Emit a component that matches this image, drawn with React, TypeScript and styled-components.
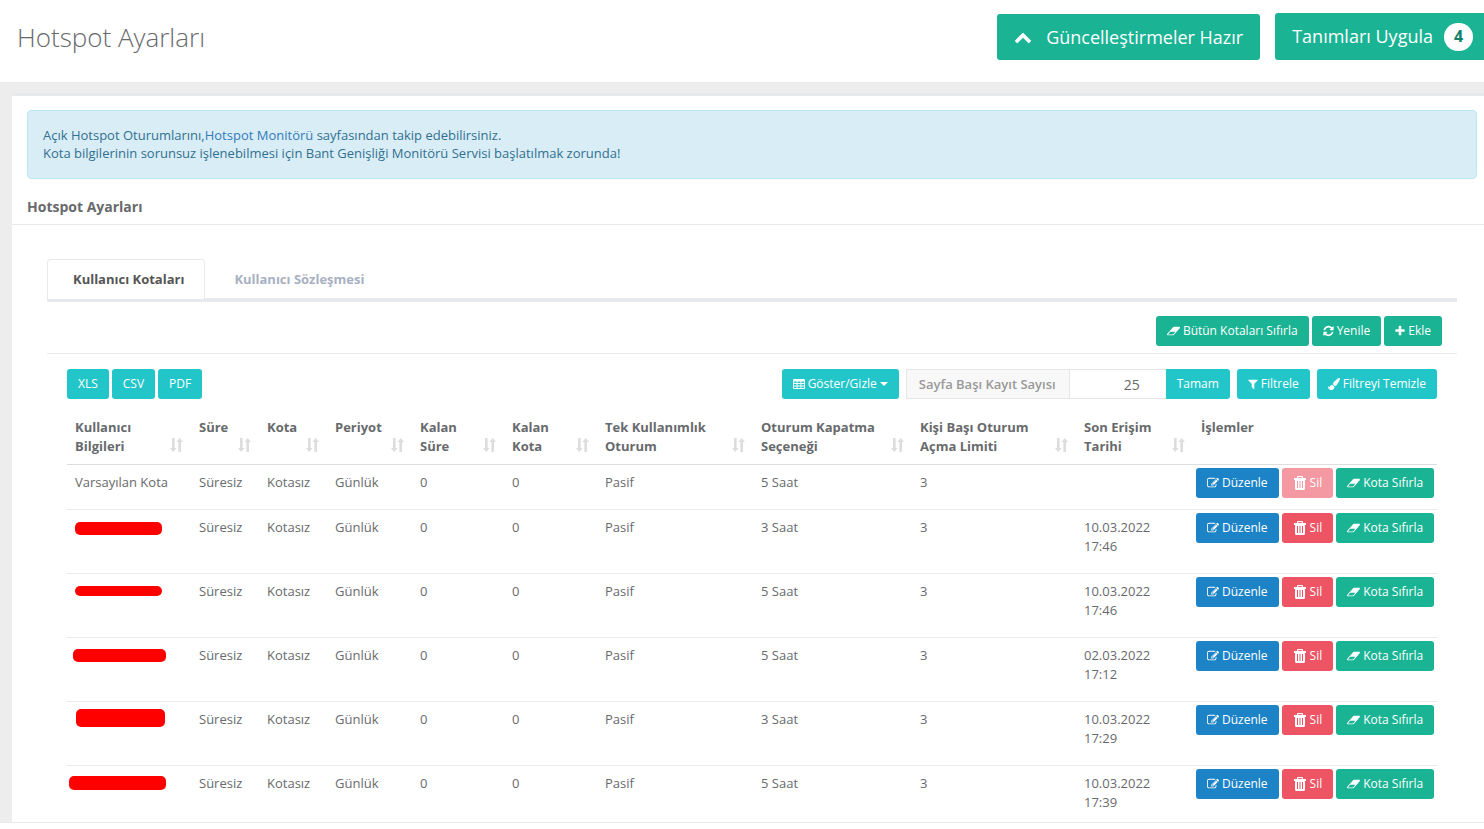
import React from "react";
import styled, { createGlobalStyle, css } from "styled-components";

const GlobalStyle = createGlobalStyle`
  *, *::before, *::after { box-sizing: border-box; }
  body {
    margin: 0;
    background: #fff;
    color: #676a6c;
    font-family: "Open Sans", "Noto Sans", sans-serif;
    font-size: 13px;
    line-height: 19px;
    overflow-x: hidden;
  }
  button, input { font-family: inherit; }
`;

const tones = {
  green: "#1ab394",
  teal: "#23c6c8",
  blue: "#1c84c6",
  red: "#ed5565",
};
type Tone = keyof typeof tones;

/* ---------- icons ---------- */

const Glyph = styled.svg<{ $w?: number; $h?: number }>`
  width: ${(p) => p.$w ?? 12}px;
  height: ${(p) => p.$h ?? 12}px;
  fill: currentColor;
  flex: none;
`;

const EraserIcon = () => (
  <Glyph viewBox="64 0 1920 1792" $w={13} aria-hidden="true">
    <path d="M960 1408l336-384h-768l-336 384h768zm1013-1077q15 34 9.5 71.5t-30.5 65.5l-896 1024q-38 44-96 44h-768q-38 0-69.5-20.5t-47.5-54.5q-15-34-9.5-71.5t30.5-65.5l896-1024q38-44 96-44h768q38 0 69.500 20.500t47.500 54.500z" />
  </Glyph>
);

const RefreshIcon = () => (
  <Glyph viewBox="128 0 1536 1792" $w={11} aria-hidden="true">
    <path d="M1639 1056q0 5-1 7-64 268-268 434.5t-478 166.5q-146 0-282.5-55t-243.5-157l-129 129q-19 19-45 19t-45-19-19-45v-448q0-26 19-45t45-19h448q26 0 45 19t19 45-19 45l-137 137q71 66 161 102t187 36q134 0 250-65t186-179q11-17 53-117 8-23 30-23h192q13 0 22.5 9.5t9.5 22.5zm25-800v448q0 26-19 45t-45 19h-448q-26 0-45-19t-19-45 19-45l138-138q-148-137-349-137-134 0-250 65t-186 179q-11 17-53 117-8 23-30 23h-199q-13 0-22.5-9.5t-9.5-22.5v-7q65-268 270-434.5t480-166.5q146 0 284 55.5t245 156.5l130-129q19-19 45-19t45 19 19 45z" />
  </Glyph>
);

const PlusIcon = () => (
  <Glyph viewBox="192 0 1408 1792" $w={10} aria-hidden="true">
    <path d="M1600 736v192q0 40-28 68t-68 28h-416v416q0 40-28 68t-68 28h-192q-40 0-68-28t-28-68v-416h-416q-40 0-68-28t-28-68v-192q0-40 28-68t68-28h416v-416q0-40 28-68t68-28h192q40 0 68 28t28 68v416h416q40 0 68 28t28 68z" />
  </Glyph>
);

const FilterIcon = () => (
  <Glyph viewBox="192 0 1408 1792" $w={10} aria-hidden="true">
    <path d="M1595 295q17 41-14 70l-493 493v742q0 42-39 59-13 5-25 5-27 0-45-19l-256-256q-19-19-19-45v-486l-493-493q-31-29-14-70 17-39 59-39h1280q42 0 59 39z" />
  </Glyph>
);

const BrushIcon = () => (
  <Glyph viewBox="0 0 1792 1792" aria-hidden="true">
    <path d="M1615 0q70 0 122.5 46.5t52.5 116.5q0 63-45 151-332 629-465 752-97 91-218 91-126 0-216.5-92.5t-90.5-219.5q0-128 92-212l638-579q59-54 130-54zm-909 1034q39 76 106.5 130t150.5 76l1 71q4 213-129.5 347t-348.5 134q-123 0-218-46.5t-152.5-127.5-86.5-183-29-220q7 5 41 30t62 44.5 59 36.5 46 17q41 0 55-37 25-66 57.5-112.5t69.5-76 88-47.5 103-25.5 125-10.5z" />
  </Glyph>
);

const TableIcon = () => (
  <Glyph viewBox="0 0 12 12" aria-hidden="true">
    <path
      fillRule="evenodd"
      d="M1 1h10a1 1 0 0 1 1 1v8a1 1 0 0 1-1 1H1a1 1 0 0 1-1-1V2a1 1 0 0 1 1-1zM1 3.4v1.7h2.6V3.4zM4.5 3.4v1.7h3V3.4zM8.4 3.4v1.7H11V3.4zM1 6v1.6h2.6V6zM4.5 6v1.6h3V6zM8.4 6v1.6H11V6zM1 8.5v1.6h2.6V8.5zM4.5 8.5v1.6h3V8.5zM8.4 8.5v1.6H11V8.5z"
    />
  </Glyph>
);

const EditIcon = () => (
  <Glyph viewBox="0 0 1792 1792" aria-hidden="true">
    <path d="M888 1184l116-116-152-152-116 116v56h96v96h56zm440-720q-16-16-33 1l-350 350q-17 17-1 33t33-1l350-350q17-17 1-33zm80 594v190q0 119-84.5 203.5t-203.5 84.5h-832q-119 0-203.5-84.5t-84.5-203.5v-832q0-119 84.5-203.5t203.5-84.5h832q63 0 117 25 15 7 18 23 3 17-9 29l-49 49q-14 14-32 8-23-6-45-6h-832q-66 0-113 47t-47 113v832q0 66 47 113t113 47h832q66 0 113-47t47-113v-126q0-13 9-22l64-64q15-15 35-7t20 29zm-96-738l288 288-672 672h-288v-288zm444 132l-92 92-288-288 92-92q28-28 68-28t68 28l152 152q28 28 28 68t-28 68z" />
  </Glyph>
);

const TrashIcon = () => (
  <Glyph viewBox="-1 0 14 14" $w={14} $h={14} aria-hidden="true">
    <path
      fillRule="evenodd"
      d="M4 0h4a1 1 0 0 1 1 1v1h2.500a.5.5 0 0 1 .5.5V4h-1v8.500A1.500 1.500 0 0 1 9.500 14h-7A1.500 1.500 0 0 1 1 12.500V4H0V2.500A.5.5 0 0 1 .5 2H3V1a1 1 0 0 1 1-1zM4.200 1.100V2h3.600v-.9zM3 5v7h1V5zM5.500 5v7h1V5zM8 5v7h1V5z"
    />
  </Glyph>
);

const ChevronUpIcon = () => (
  <Glyph viewBox="0 0 1792 1792" $w={18} $h={18} aria-hidden="true">
    <path d="M1683 1331l-166 165q-19 19-45 19t-45-19l-531-531-531 531q-19 19-45 19t-45-19l-166-165q-19-19-19-45.500t19-45.500l742-741q19-19 45-19t45 19l742 741q19 19 19 45.500t-19 45.500z" />
  </Glyph>
);

const CaretIcon = () => (
  <Glyph viewBox="0 0 8 4" $w={8} $h={4} aria-hidden="true">
    <path d="M0 0h8L4 4z" />
  </Glyph>
);

const SortIcon = () => (
  <Glyph viewBox="0 0 13 14" $w={13} $h={14} aria-hidden="true">
    <path d="M2 0h2.600v10h2L3.300 14 0 10h2zM8.400 14H11V4h2L9.700 0 6.400 4h2z" />
  </Glyph>
);

/* ---------- page ---------- */

const Header = styled.header`
  display: flex;
  justify-content: space-between;
  align-items: flex-start;
  height: 83px;
  padding: 13px 0 0 17px;
  background: #fff;
  border-bottom: 1px solid #e7eaec;
`;

const PageTitle = styled.h1`
  margin: 7px 0 0;
  font-size: 26px;
  line-height: 34px;
  font-weight: 300;
`;

const HeaderActions = styled.div`
  display: flex;
  align-items: flex-end;
  gap: 15px;
`;

const BigButton = styled.button`
  display: flex;
  align-items: center;
  gap: 14px;
  height: 46px;
  padding: 0 17px;
  border: 0;
  border-radius: 3px;
  background: ${tones.green};
  color: #fff;
  font-size: 18px;
  line-height: 24px;
`;

const ApplyButton = styled(BigButton)`
  align-items: flex-start;
  gap: 11px;
  height: 47px;
  padding: 10px 11px 0 17px;
  border-radius: 3px 0 0 3px;
  line-height: 26px;
`;

const Count = styled.span`
  width: 29px;
  height: 28px;
  border-radius: 14px;
  background: #fff;
  color: #128066;
  font-size: 16px;
  line-height: 27px;
  font-weight: 700;
  text-align: center;
`;

const Content = styled.div`
  padding: 10px 0 0 12px;
  background: #ededed;
  border-bottom: 1px solid #e7eaec;
`;

const Panel = styled.main`
  padding-top: 14px;
  background: #fff;
  border-top: 3px solid #e7eaec;
`;

const Notice = styled.div`
  margin: 0 7px 0 15px;
  padding: 15px 15px 16px;
  background: #d9edf7;
  border: 1px solid #bce8f1;
  border-radius: 4px;
  color: #31708f;
  line-height: 18px;

  p { margin: 0; }
  a { color: #337ab7; text-decoration: none; }
`;

const PanelTitle = styled.h2`
  margin: 0;
  padding: 18px 15px 7px;
  border-bottom: 1px solid #e7eaec;
  font-size: 14px;
  line-height: 20px;
  font-weight: 700;
`;

const PanelBody = styled.div`
  padding: 34px 27px 0 35px;
`;

const Tabs = styled.div`
  display: flex;
  gap: 3px;
  border-bottom: 4px solid #e7eaec;
`;

const Tab = styled.button<{ $active?: boolean }>`
  height: 40px;
  margin-bottom: -1px;
  padding: 0 20px 0 25px;
  border: 1px solid transparent;
  border-bottom: 0;
  border-radius: 4px 4px 0 0;
  background: transparent;
  color: #a7b1c2;
  font-size: 13px;
  line-height: 19px;
  font-weight: 700;
  ${(p) =>
    p.$active &&
    css`
      border-color: #e7eaec;
      background: #fff;
      color: #555;
    `}
`;

const Toolbar = styled.div`
  display: flex;
  justify-content: flex-end;
  gap: 3px;
  padding: 14px 15px 7px;
  border-bottom: 1px solid #e7eaec;
`;

const Button = styled.button<{ $tone: Tone; $joined?: boolean }>`
  display: inline-flex;
  align-items: center;
  gap: 3px;
  height: 30px;
  padding: 0 11px;
  border: 0;
  border-radius: ${(p) => (p.$joined ? "0 3px 3px 0" : "3px")};
  background: ${(p) => tones[p.$tone]};
  color: #fff;
  font-size: 12px;
  line-height: 18px;
  white-space: nowrap;
  &:disabled { opacity: 0.6; }
`;

const Controls = styled.div`
  display: flex;
  justify-content: space-between;
  padding: 15px 20px 0;
`;

const ButtonGroup = styled.div<{ $gap: number }>`
  display: flex;
  gap: ${(p) => p.$gap}px;
`;

const PageSize = styled.form`
  display: flex;
`;

const PageSizeLabel = styled.label`
  height: 30px;
  padding: 0 13px 0 12px;
  border: 1px solid #e5e6e7;
  background: #f8f8f8;
  color: #999;
  font-weight: 600;
  line-height: 29px;
  white-space: nowrap;
`;

const PageSizeInput = styled.input`
  width: 96px;
  height: 30px;
  padding: 1px 26px 0 8px;
  border: solid #e5e6e7;
  border-width: 1px 0;
  background: #fff;
  color: #676a6c;
  font-size: 14px;
  text-align: right;
`;

const TableArea = styled.div`
  padding: 10px 20px 0;
`;

const Table = styled.table`
  width: 100%;
  table-layout: fixed;
  border-collapse: separate;
  border-spacing: 0;
`;

const Column = styled.col<{ $width: number }>`
  width: ${(p) => p.$width}px;
`;

const HeadCell = styled.th`
  padding: 9px 8px 8px;
  border-bottom: 1px solid #ddd;
  text-align: left;
  vertical-align: top;
  font-weight: 700;
`;

const HeadContent = styled.div`
  display: flex;
  justify-content: space-between;
  align-items: flex-end;
  height: 38px;
  padding-bottom: 4px;
  color: #ddd;
`;

const HeadLabel = styled.span`
  align-self: flex-start;
  color: #676a6c;
  white-space: pre-line;
`;

const Cell = styled.td`
  padding: 8px 8px 17px;
  border-bottom: 1px solid #e7eaec;
  vertical-align: top;

  tr:last-child & {
    padding-bottom: 10px;
    border-bottom: 0;
  }
`;

const DateCell = styled(Cell)`
  padding-right: 32px;
`;

const ActionCell = styled(Cell)`
  padding: 3px 3px 0;
`;

const Redaction = styled.div<{ $w: number; $h: number; $x: number; $y: number }>`
  width: ${(p) => p.$w}px;
  height: ${(p) => p.$h}px;
  margin: ${(p) => p.$y}px 0 0 ${(p) => p.$x}px;
  border-radius: 5px;
  background: #f00;
`;

const columns = [
  { label: "Kullanıcı\nBilgileri", width: 124 },
  { label: "Süre", width: 68 },
  { label: "Kota", width: 68 },
  { label: "Periyot", width: 85 },
  { label: "Kalan\nSüre", width: 92 },
  { label: "Kalan\nKota", width: 93 },
  { label: "Tek Kullanımlık\nOturum", width: 156 },
  { label: "Oturum Kapatma\nSeçeneği", width: 159 },
  { label: "Kişi Başı Oturum\nAçma Limiti", width: 164 },
  { label: "Son Erişim\nTarihi", width: 117 },
];

type Mark = { w: number; h: number; x: number; y: number };
type Row = { name?: string; mark?: Mark; timeout: string; lastAccess: string };

const rows: Row[] = [
  { name: "Varsayılan Kota", timeout: "5 Saat", lastAccess: "" },
  { mark: { w: 87, h: 13, x: 0, y: 4 }, timeout: "3 Saat", lastAccess: "10.03.2022 17:46" },
  { mark: { w: 87, h: 10, x: 0, y: 4 }, timeout: "5 Saat", lastAccess: "10.03.2022 17:46" },
  { mark: { w: 93, h: 13, x: -2, y: 3 }, timeout: "5 Saat", lastAccess: "02.03.2022 17:12" },
  { mark: { w: 89, h: 18, x: 1, y: -1 }, timeout: "3 Saat", lastAccess: "10.03.2022 17:29" },
  { mark: { w: 97, h: 14, x: -6, y: 2 }, timeout: "5 Saat", lastAccess: "10.03.2022 17:39" },
];

export default function App() {
  return (
    <>
      <GlobalStyle />
      <Header>
        <PageTitle>Hotspot Ayarları</PageTitle>
        <HeaderActions>
          <BigButton type="button">
            <ChevronUpIcon />
            Güncelleştirmeler Hazır
          </BigButton>
          <ApplyButton type="button">
            Tanımları Uygula
            <Count>4</Count>
          </ApplyButton>
        </HeaderActions>
      </Header>
      <Content>
        <Panel>
          <Notice>
            <p>
              Açık Hotspot Oturumlarını,<a href="#monitor">Hotspot Monitörü</a> sayfasından takip edebilirsiniz.
            </p>
            <p>Kota bilgilerinin sorunsuz işlenebilmesi için Bant Genişliği Monitörü Servisi başlatılmak zorunda!</p>
          </Notice>
          <PanelTitle>Hotspot Ayarları</PanelTitle>
          <PanelBody>
            <Tabs role="tablist">
              <Tab type="button" role="tab" aria-selected="true" $active>
                Kullanıcı Kotaları
              </Tab>
              <Tab type="button" role="tab" aria-selected="false">
                Kullanıcı Sözleşmesi
              </Tab>
            </Tabs>
            <Toolbar>
              <Button type="button" $tone="green"><EraserIcon />Bütün Kotaları Sıfırla</Button>
              <Button type="button" $tone="green"><RefreshIcon />Yenile</Button>
              <Button type="button" $tone="green"><PlusIcon />Ekle</Button>
            </Toolbar>
            <Controls>
              <ButtonGroup $gap={3}>
                <Button type="button" $tone="teal">XLS</Button>
                <Button type="button" $tone="teal">CSV</Button>
                <Button type="button" $tone="teal">PDF</Button>
              </ButtonGroup>
              <ButtonGroup $gap={7}>
                <Button type="button" $tone="teal"><TableIcon />Göster/Gizle<CaretIcon /></Button>
                <PageSize onSubmit={(e) => e.preventDefault()}>
                  <PageSizeLabel htmlFor="page-size">Sayfa Başı Kayıt Sayısı</PageSizeLabel>
                  <PageSizeInput id="page-size" type="text" inputMode="numeric" defaultValue="25" />
                  <Button type="submit" $tone="teal" $joined>Tamam</Button>
                </PageSize>
                <Button type="button" $tone="teal"><FilterIcon />Filtrele</Button>
                <Button type="button" $tone="teal"><BrushIcon />Filtreyi Temizle</Button>
              </ButtonGroup>
            </Controls>
            <TableArea>
              <Table>
                <colgroup>
                  {columns.map((c) => <Column key={c.label} $width={c.width} />)}
                  <Column $width={244} />
                </colgroup>
                <thead>
                  <tr>
                    {columns.map((c) => (
                      <HeadCell key={c.label} scope="col">
                        <HeadContent>
                          <HeadLabel>{c.label}</HeadLabel>
                          <SortIcon />
                        </HeadContent>
                      </HeadCell>
                    ))}
                    <HeadCell scope="col">İşlemler</HeadCell>
                  </tr>
                </thead>
                <tbody>
                  {rows.map((r, i) => (
                    <tr key={i}>
                      <Cell>
                        {r.name}
                        {r.mark && <Redaction $w={r.mark.w} $h={r.mark.h} $x={r.mark.x} $y={r.mark.y} />}
                      </Cell>
                      <Cell>Süresiz</Cell>
                      <Cell>Kotasız</Cell>
                      <Cell>Günlük</Cell>
                      <Cell>0</Cell>
                      <Cell>0</Cell>
                      <Cell>Pasif</Cell>
                      <Cell>{r.timeout}</Cell>
                      <Cell>3</Cell>
                      <DateCell>{r.lastAccess}</DateCell>
                      <ActionCell>
                        <ButtonGroup $gap={3}>
                          <Button type="button" $tone="blue"><EditIcon />Düzenle</Button>
                          <Button type="button" $tone="red" disabled={i === 0}><TrashIcon />Sil</Button>
                          <Button type="button" $tone="green"><EraserIcon />Kota Sıfırla</Button>
                        </ButtonGroup>
                      </ActionCell>
                    </tr>
                  ))}
                </tbody>
              </Table>
            </TableArea>
          </PanelBody>
        </Panel>
      </Content>
    </>
  );
}
